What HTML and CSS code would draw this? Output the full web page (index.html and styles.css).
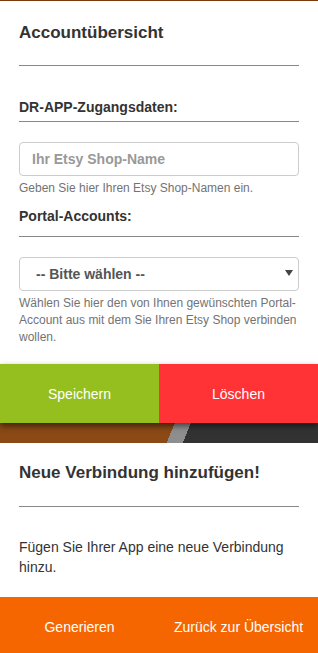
FILE: index.html
```html
<!DOCTYPE html>
<html lang="de">
<head>
	<meta charset="UTF-8">
	<title>Accountübersicht</title>
	<link rel="stylesheet" href="styles.css">
</head>
<body>

	<div class="panel">
		<h2 class="title">Accountübersicht</h2>
		<hr class="line line-title">

		<label class="label label-first">DR-APP-Zugangsdaten:</label>
		<hr class="line line-label">
		<input class="field" type="text" placeholder="Ihr Etsy Shop-Name">
		<p class="help">Geben Sie hier Ihren Etsy Shop-Namen ein.</p>

		<label class="label label-next">Portal-Accounts:</label>
		<hr class="line line-label-next">
		<div class="select-wrap">
			<select class="field field-select">
				<option>-- Bitte wählen --</option>
			</select>
			<span class="caret"></span>
		</div>
		<p class="help">Wählen Sie hier den von Ihnen gewünschten Portal-Account aus mit dem Sie Ihren Etsy Shop verbinden wollen.</p>
	</div>

	<div class="actions">
		<button class="btn btn-save">Speichern</button>
		<button class="btn btn-delete">Löschen</button>
	</div>
	<div class="strip"></div>

	<div class="panel panel-add">
		<h2 class="title">Neue Verbindung hinzufügen!</h2>
		<hr class="line line-add">
		<p class="text">Fügen Sie Ihrer App eine neue Verbindung hinzu.</p>
	</div>

	<div class="footer">
		<button class="btn btn-footer">Generieren</button>
		<button class="btn btn-footer">Zurück zur Übersicht</button>
	</div>

</body>
</html>
```

FILE: styles.css
```css
html,body{ margin: 0;padding: 0; }
body{ font-family: "Liberation Sans", Arial, sans-serif; color: #333; background: #fff;
		border-top: 1px solid #7a3b0c; }

.panel{ padding: 0 19px; }
.title{ margin: 22px 0 0; font-size: 17px; line-height: 20px; font-weight: bold; color: #333; }
.line{ margin: 0; border: 0; border-top: 1px solid #888; height: 0; }
.line-title{ margin-top: 22px; }
.line-label{ margin-top: 4px; }
.line-label-next{ margin-top: 10px; }
.line-add{ margin-top: 23px; }

.label{ display: block; font-size: 14px; line-height: 20px; font-weight: bold; }
.label-first{ margin-top: 31px; }
.label-next{ margin-top: 9px; }

.field{ display: block; box-sizing: border-box; width: 100%; height: 34px; margin-top: 20px;
		padding: 6px 12px; border: 1px solid #ccc; border-radius: 4px; background: #fff;
		font-family: inherit; font-size: 14px; font-weight: bold; color: #555; outline: none; }
.field::placeholder{ color: #999; }
.select-wrap{ position: relative; margin-top: 20px; }
.field-select{ -webkit-appearance: none; appearance: none; padding-left: 16px; margin-top: 0; }
.caret{ position: absolute; right: 6px; top: 13px; width: 0; height: 0;
		border-left: 4px solid transparent; border-right: 4px solid transparent;
		border-top: 6px solid #444; pointer-events: none; }

.help{ margin: 4px 0 0; font-size: 12px; line-height: 17px; color: #737373; }

.actions{ display: flex; margin-top: 18px; position: relative; z-index: 1;
		box-shadow: 0 3px 6px rgba(0,0,0,.55); }
.btn{ flex: 1; border: 0; margin: 0; padding: 0; font-family: inherit; font-size: 14px;
		color: #fff; cursor: pointer; }
.btn-save{ height: 59px; background: #94bf1f; }
.btn-delete{ height: 59px; background: #ff3335; }

.strip{ height: 20px;
		background: linear-gradient(112deg, #8a4915 162px, #8e8e8e 162px, #8e8e8e 177px, #323232 177px); }

.panel-add .title{ margin-top: 20px; }
.text{ margin: 30px 0 0; font-size: 14px; line-height: 20px; color: #333; }

.footer{ display: flex; margin-top: 20px; background: #f66600; }
.btn-footer{ height: 56px; padding-top: 4px; background: transparent; }
```
